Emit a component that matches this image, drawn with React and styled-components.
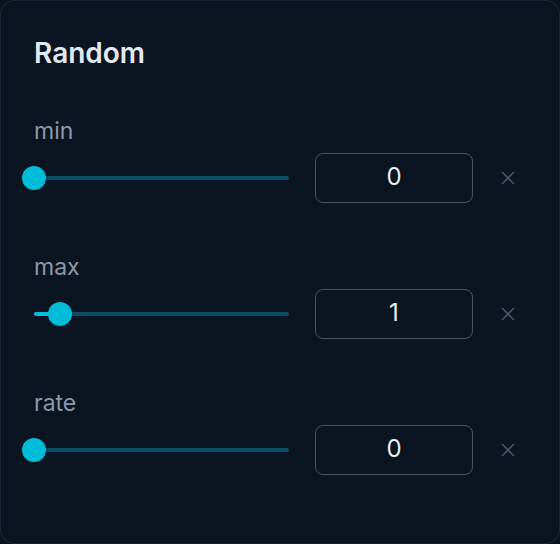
import React, { useState } from 'react';
import styled, { createGlobalStyle } from 'styled-components';

const GlobalStyle = createGlobalStyle`
    html, body {
        margin: 0;
        padding: 0;
        background: #0b1320;
    }
    * {
        box-sizing: border-box;
    }
`;

const params = [
    { name: 'min', value: 0, max: 10 },
    { name: 'max', value: 1, max: 10 },
    { name: 'rate', value: 0, max: 10 },
];

const Field = ({ name, value, max }) => {
    const [val, setVal] = useState(value);
    const pct = (val / max) * 100;

    return (
        <FieldWrapper>
            <Label>{name}</Label>
            <Controls>
                <SliderBox>
                    <Track>
                        <Fill style={{ width: `${pct}%` }} />
                        <Thumb style={{ left: `${pct}%` }} />
                    </Track>
                </SliderBox>
                <ValueInput
                    type="text"
                    value={val}
                    onChange={(e) => setVal(Number(e.target.value) || 0)}
                />
                <ClearButton onClick={() => setVal(0)} aria-label="clear">
                    <svg width="18" height="18" viewBox="0 0 18 18">
                        <path
                            d="M3.5 3.5 L14.5 14.5 M14.5 3.5 L3.5 14.5"
                            stroke="currentColor"
                            strokeWidth="1.7"
                            strokeLinecap="round"
                        />
                    </svg>
                </ClearButton>
            </Controls>
        </FieldWrapper>
    );
};

const App = () => {
    return (
        <>
            <GlobalStyle />
            <Card>
                <Title>Random</Title>
                <Fields>
                    {params.map((p) => (
                        <Field key={p.name} {...p} />
                    ))}
                </Fields>
            </Card>
        </>
    );
};

export default App;

const Card = styled.div`
    width: 560px;
    height: 544px;
    padding: 36px 0 0 33px;
    background-color: #0b1421;
    border: 1px solid #1c2636;
    border-radius: 14px;
    font-family: 'Inter', 'Noto Sans', sans-serif;
`;

const Title = styled.h2`
    margin: 0 0 48px;
    font-size: 28px;
    line-height: 32px;
    font-weight: 600;
    color: #e2e8f0;
`;

const Fields = styled.div`
    display: flex;
    flex-direction: column;
    gap: 50px;
`;

const FieldWrapper = styled.div`
    display: flex;
    flex-direction: column;
`;

const Label = styled.span`
    display: block;
    margin-bottom: 8px;
    font-size: 23px;
    line-height: 28px;
    color: #8a99ad;
`;

const Controls = styled.div`
    display: flex;
    align-items: center;
    height: 50px;
`;

const SliderBox = styled.div`
    width: 255px;
    margin-right: 26px;
`;

const Track = styled.div`
    position: relative;
    height: 4px;
    border-radius: 2px;
    background-color: #0b4d61;
`;

const Fill = styled.div`
    height: 100%;
    border-radius: 2px;
    background-color: #00bcd8;
`;

const Thumb = styled.div`
    position: absolute;
    top: 50%;
    width: 24px;
    height: 24px;
    border-radius: 50%;
    background-color: #00bcd8;
    transform: translate(-50%, -50%);
`;

const ValueInput = styled.input`
    width: 158px;
    height: 50px;
    padding: 0 0 4px;
    border: 1.5px solid #4b5361;
    border-radius: 8px;
    background-color: transparent;
    color: #e8edf3;
    font-family: 'Inter', 'Noto Sans', sans-serif;
    font-size: 24px;
    text-align: center;
    outline: none;
`;

const ClearButton = styled.button`
    display: flex;
    align-items: center;
    justify-content: center;
    width: 24px;
    height: 24px;
    margin-left: 23px;
    padding: 0;
    border: none;
    background: none;
    color: #4a5465;
    cursor: pointer;
`;
